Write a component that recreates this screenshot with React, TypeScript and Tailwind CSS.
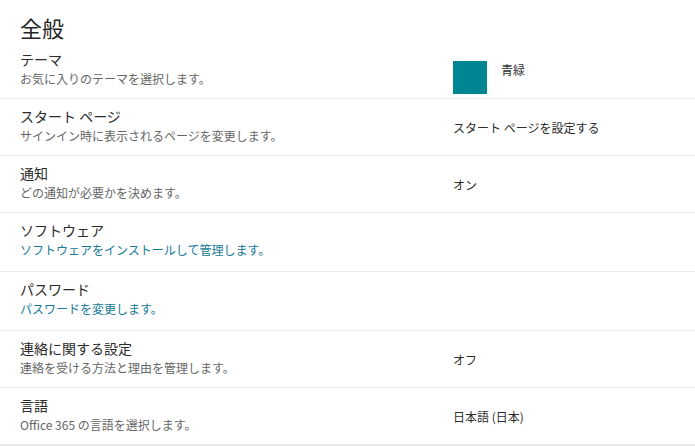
import React from "react";

type Row = {
  title: string;
  desc: string;
  link?: boolean;
  value?: string;
  swatch?: boolean;
};

const rows: Row[] = [
  { title: "テーマ", desc: "お気に入りのテーマを選択します。", value: "青緑", swatch: true },
  { title: "スタート ページ", desc: "サインイン時に表示されるページを変更します。", value: "スタート ページを設定する" },
  { title: "通知", desc: "どの通知が必要かを決めます。", value: "オン" },
  { title: "ソフトウェア", desc: "ソフトウェアをインストールして管理します。", link: true },
  { title: "パスワード", desc: "パスワードを変更します。", link: true },
  { title: "連絡に関する設定", desc: "連絡を受ける方法と理由を管理します。", value: "オフ" },
  { title: "言語", desc: "Office 365 の言語を選択します。", value: "日本語 (日本)" },
];

export default function App() {
  return (
    <div
      className="w-[695px] h-[446px] overflow-hidden bg-white"
      style={{ fontFamily: '"Noto Sans CJK JP", "Open Sans", sans-serif' }}
    >
      <div className="px-5 pt-[12px] h-[42px] text-[22px] leading-[30px] text-[#262626]">全般</div>
      <div className="flex flex-col">
        {rows.map((r, i) => (
          <div
            key={i}
            className={
              "grid grid-cols-[433px_1fr] px-5 pt-[7px] " +
              (r.link ? "pb-[12px] " : "pb-[10px] ") +
              (i === rows.length - 1 ? "border-b-2 border-[#e8e8e8]" : "border-b border-[#ebebeb]")
            }
          >
            <div className="flex flex-col">
              <div className="text-[14px] leading-[21px] text-[#2b2b2b]">{r.title}</div>
              <div
                className={
                  "text-[12px] leading-[18px] " + (r.link ? "text-[#137997]" : "text-[#666666]")
                }
              >
                {r.desc}
              </div>
            </div>
            {r.swatch ? (
              <div className="h-[39px]">
                <div className="flex items-start gap-[14px] pt-[12px]">
                  <div className="w-[34px] h-[33px] bg-[#008592]" />
                  <div className="text-[12px] leading-[18px] text-[#333333]">{r.value}</div>
                </div>
              </div>
            ) : (
              <div className="flex items-center pt-[4px] text-[12px] leading-[18px] text-[#2b2b2b]">
                {r.value ?? ""}
              </div>
            )}
          </div>
        ))}
      </div>
    </div>
  );
}
